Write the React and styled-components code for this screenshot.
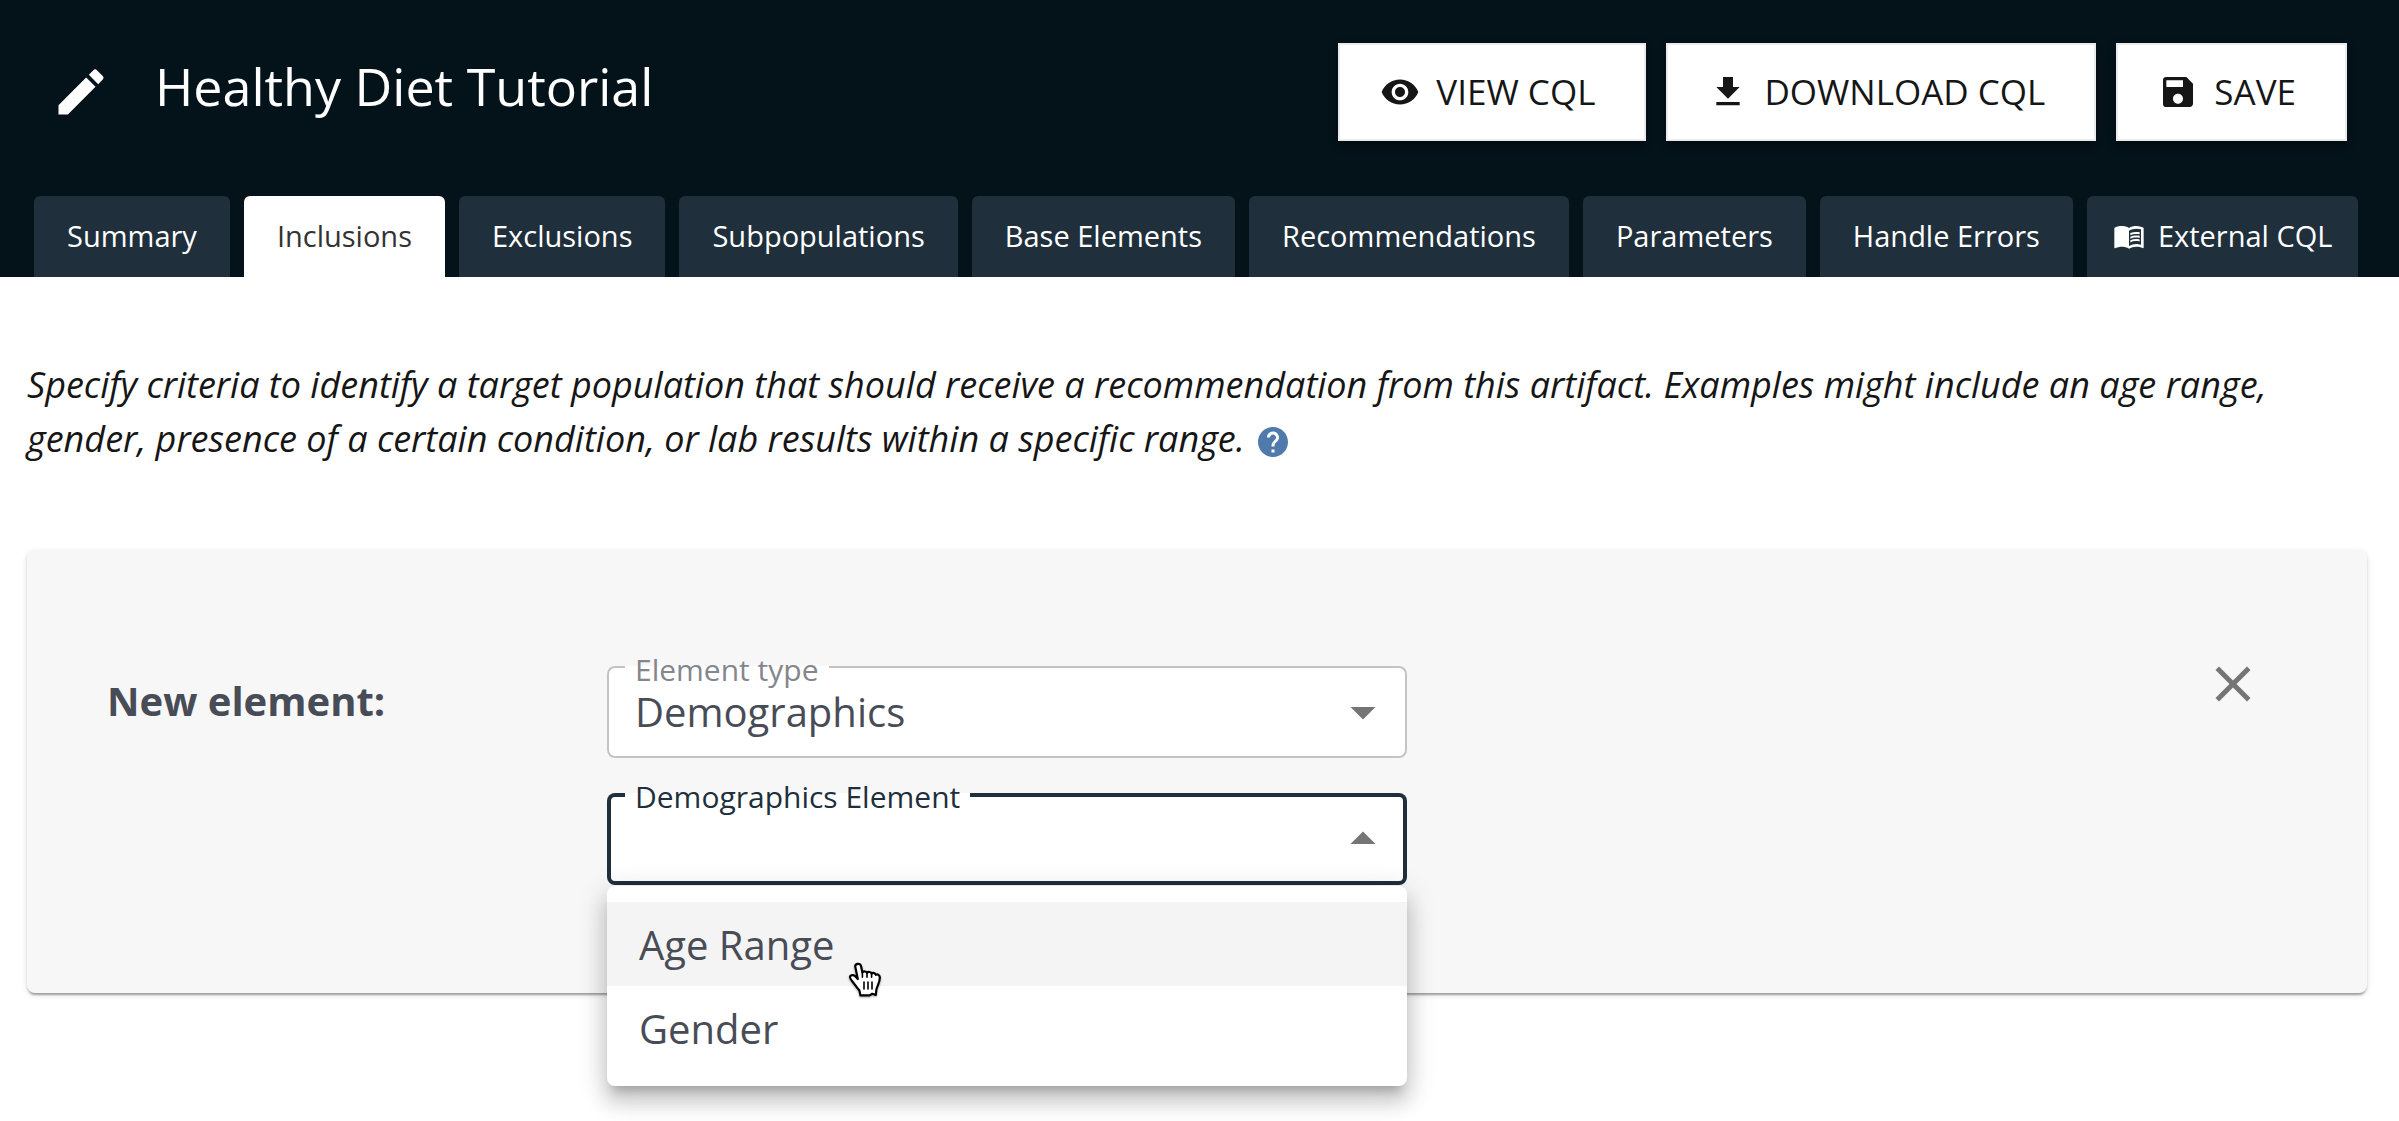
import React, { useState } from 'react';
import styled, { createGlobalStyle } from 'styled-components';
import {
  MdCreate,
  MdVisibility,
  MdSave,
  MdMenuBook,
  MdHelp,
  MdClose,
  MdArrowDropDown,
  MdArrowDropUp,
} from 'react-icons/md';

const GlobalStyle = createGlobalStyle`
  *, *::before, *::after { box-sizing: border-box; }
  body {
    margin: 0;
    background: #fff;
    color: #161616;
    font-family: 'Open Sans', 'Noto Sans', sans-serif;
  }
  button, input, select { font-family: inherit; }
`;

const Page = styled.div`
  min-height: 100vh;
`;

const Header = styled.header`
  background: #041219;
  color: #fff;
`;

const TitleBar = styled.div`
  display: flex;
  align-items: flex-start;
  justify-content: space-between;
  padding: 43px 52px 55px 51px;
`;

const TitleGroup = styled.div`
  display: flex;
  align-items: center;
  gap: 44px;
  height: 98px;
`;

const IconButton = styled.button`
  display: flex;
  padding: 0;
  border: 0;
  background: none;
  color: ${(p) => p.$color};
  font-size: 60px;
  cursor: pointer;
`;

const Title = styled.h1`
  margin: 0;
  padding-bottom: 12px;
  font-size: 52px;
  font-weight: 400;
  line-height: 72px;
`;

const Actions = styled.div`
  display: flex;
  gap: 20px;
`;

const ActionButton = styled.button`
  display: flex;
  align-items: center;
  gap: 16px;
  height: 98px;
  padding: 0 49px 0 40px;
  border: 2px solid #e9ecef;
  background: #fff;
  color: #161616;
  font-size: 35px;
  font-weight: 500;
  line-height: 56px;
  box-shadow: 0 4px 8px rgba(0, 0, 0, 0.4);
  cursor: pointer;

  svg {
    width: 40px;
    height: 40px;
  }
`;

const Tabs = styled.nav`
  display: flex;
  gap: 14px;
  padding: 0 34px;
`;

const Tab = styled.button`
  display: flex;
  align-items: center;
  gap: 13px;
  height: 81px;
  padding: 0 ${(p) => (p.$hasIcon ? 26 : 33)}px 2px;
  border: 0;
  border-radius: 6px 6px 0 0;
  background: ${(p) => (p.$active ? '#fff' : '#202f3c')};
  color: ${(p) => (p.$active ? '#333' : '#fff')};
  font-size: 29px;
  white-space: nowrap;
  cursor: pointer;

  svg { font-size: 32px; }
`;

const Main = styled.main`
  padding: 81px 32px 0 27px;
`;

const Intro = styled.p`
  margin: 0 0 84px;
  font-size: 36px;
  font-style: italic;
  line-height: 54px;
`;

const HelpLink = styled.a`
  display: inline-flex;
  margin-left: 1px;
  color: #4f7bac;
  vertical-align: -8px;
`;

const Card = styled.section`
  display: grid;
  grid-template-columns: 500px minmax(0, 800px) 1fr;
  align-items: start;
  padding: 104px 104px 108px 80px;
  border-radius: 8px;
  background: #f7f7f7;
  box-shadow: 0 4px 2px -2px rgba(0, 0, 0, 0.2), 0 2px 2px rgba(0, 0, 0, 0.14),
    0 2px 6px rgba(0, 0, 0, 0.12);
`;

const CardTitle = styled.h2`
  margin: 0;
  padding-top: 22px;
  color: #484c56;
  font-size: 40px;
  font-weight: 700;
  line-height: 50px;
`;

const Fields = styled.div`
  display: grid;
  gap: 35px;
  padding-top: 12px;
`;

const CloseCell = styled.div`
  display: flex;
  justify-content: flex-end;
`;

const Field = styled.div`
  position: relative;
  display: grid;
  align-items: center;
  height: 92px;
  border-radius: 8px;
  background: #fff;
  box-shadow: inset 0 0 0 ${(p) => (p.$open ? '4px #202f3c' : '2px #c4c4c4')};
`;

const FieldLabel = styled.label`
  position: absolute;
  top: -16px;
  left: 18px;
  padding: 0 10px;
  background: linear-gradient(#fff, #fff) no-repeat 0 16px / 100% 4px;
  color: ${(p) => (p.$open ? '#202f3c' : '#83868d')};
  font-size: 30px;
  line-height: 40px;
`;

const Select = styled.select`
  grid-area: 1 / 1;
  width: 100%;
  height: 92px;
  padding: 0 80px 2px 28px;
  border: 0;
  outline: 0;
  appearance: none;
  background: none;
  color: #484c56;
  font-size: 40px;
`;

const Arrow = styled.span`
  grid-area: 1 / 1;
  justify-self: end;
  display: flex;
  margin-right: 14px;
  color: #757575;
  font-size: 60px;
  pointer-events: none;
`;

const Menu = styled.ul`
  position: absolute;
  top: calc(100% + 1px);
  left: 0;
  right: 0;
  z-index: 1;
  margin: 0;
  padding: 16px 0;
  border-radius: 8px;
  background: #fff;
  list-style: none;
  box-shadow: 0 10px 10px -6px rgba(0, 0, 0, 0.2),
    0 16px 20px 2px rgba(0, 0, 0, 0.14), 0 6px 28px 4px rgba(0, 0, 0, 0.12);
`;

const Option = styled.li`
  position: relative;
  height: 84px;
  padding: 0 32px;
  background: ${(p) => (p.$hovered ? '#f4f4f4' : 'transparent')};
  color: #484c56;
  font-size: 40px;
  line-height: 86px;
  cursor: pointer;
`;

const Pointer = styled.svg`
  position: absolute;
  top: 60px;
  left: 241px;
  z-index: 1;
  width: 34px;
  height: 36px;
  filter: drop-shadow(0 1px 1px rgba(0, 0, 0, 0.35));
`;

function DownloadIcon() {
  return (
    <svg viewBox="0 0 24 24" fill="currentColor" aria-hidden="true">
      <path d="M19 9h-4V3H9v6H5l7 7 7-7zM5 18v2h14v-2H5z" />
    </svg>
  );
}

function HandPointer() {
  return (
    <Pointer viewBox="0 0 34 36" aria-hidden="true">
      <path
        d="M7.2 4.4C7.4 1.2 12.2 1 13 4L14.4 10.4C15.6 9 18.4 9.2 19 10.8C20.4 9.4 23 9.8 23.6 11.6C25 10.4 27.4 11 27.8 12.8C29.6 11.8 31.8 13.2 31.8 15.4C32 20.6 29.2 23.6 28.4 27.4L27.8 33L24.2 31.8L21.6 33.4H12.4L11.4 28.4C8.6 25.8 7.4 23 4.6 19.8C2 16.8 1.4 15.6 2.2 14.2C3.4 12.4 6.4 12.8 8 15L9.8 17Z"
        fill="#fff"
        stroke="#000"
        strokeWidth="2.2"
        strokeLinejoin="round"
      />
      <path
        d="M14.4 10.4V15.2M19 10.8V15.2M23.6 11.6V15.2M16 20V27M20 20V27M24 20V27"
        fill="none"
        stroke="#000"
        strokeWidth="1.6"
        strokeLinecap="round"
      />
    </Pointer>
  );
}

const TABS = [
  'Summary',
  'Inclusions',
  'Exclusions',
  'Subpopulations',
  'Base Elements',
  'Recommendations',
  'Parameters',
  'Handle Errors',
  'External CQL',
];

const OPTIONS = ['Age Range', 'Gender'];

export default function App() {
  const [activeTab, setActiveTab] = useState('Inclusions');
  const [hovered, setHovered] = useState('Age Range');

  return (
    <Page>
      <GlobalStyle />
      <Header>
        <TitleBar>
          <TitleGroup>
            <IconButton $color="#fff" aria-label="Edit artifact">
              <MdCreate />
            </IconButton>
            <Title>Healthy Diet Tutorial</Title>
          </TitleGroup>
          <Actions>
            <ActionButton>
              <MdVisibility />
              VIEW CQL
            </ActionButton>
            <ActionButton>
              <DownloadIcon />
              DOWNLOAD CQL
            </ActionButton>
            <ActionButton>
              <MdSave />
              SAVE
            </ActionButton>
          </Actions>
        </TitleBar>
        <Tabs>
          {TABS.map((name) => (
            <Tab
              key={name}
              $active={name === activeTab}
              $hasIcon={name === 'External CQL'}
              onClick={() => setActiveTab(name)}
            >
              {name === 'External CQL' && <MdMenuBook />}
              {name}
            </Tab>
          ))}
        </Tabs>
      </Header>
      <Main>
        <Intro>
          Specify criteria to identify a target population that should receive a
          recommendation from this artifact. Examples might include an age
          range, gender, presence of a certain condition, or lab results within
          a specific range.{' '}
          <HelpLink href="#help" aria-label="Help">
            <MdHelp />
          </HelpLink>
        </Intro>
        <Card>
          <CardTitle>New element:</CardTitle>
          <Fields>
            <Field>
              <Select id="element-type" defaultValue="Demographics">
                <option>Demographics</option>
              </Select>
              <Arrow>
                <MdArrowDropDown />
              </Arrow>
              <FieldLabel htmlFor="element-type">Element type</FieldLabel>
            </Field>
            <Field $open>
              <Select id="demographics-element" defaultValue="">
                <option value="" />
                {OPTIONS.map((name) => (
                  <option key={name}>{name}</option>
                ))}
              </Select>
              <Arrow>
                <MdArrowDropUp />
              </Arrow>
              <FieldLabel $open htmlFor="demographics-element">
                Demographics Element
              </FieldLabel>
              <Menu role="listbox" aria-label="Demographics Element">
                {OPTIONS.map((name) => (
                  <Option
                    key={name}
                    role="option"
                    aria-selected={false}
                    $hovered={name === hovered}
                    onMouseEnter={() => setHovered(name)}
                  >
                    {name}
                    {name === 'Age Range' && <HandPointer />}
                  </Option>
                ))}
              </Menu>
            </Field>
          </Fields>
          <CloseCell>
            <IconButton $color="#757575" aria-label="Close">
              <MdClose />
            </IconButton>
          </CloseCell>
        </Card>
      </Main>
    </Page>
  );
}
